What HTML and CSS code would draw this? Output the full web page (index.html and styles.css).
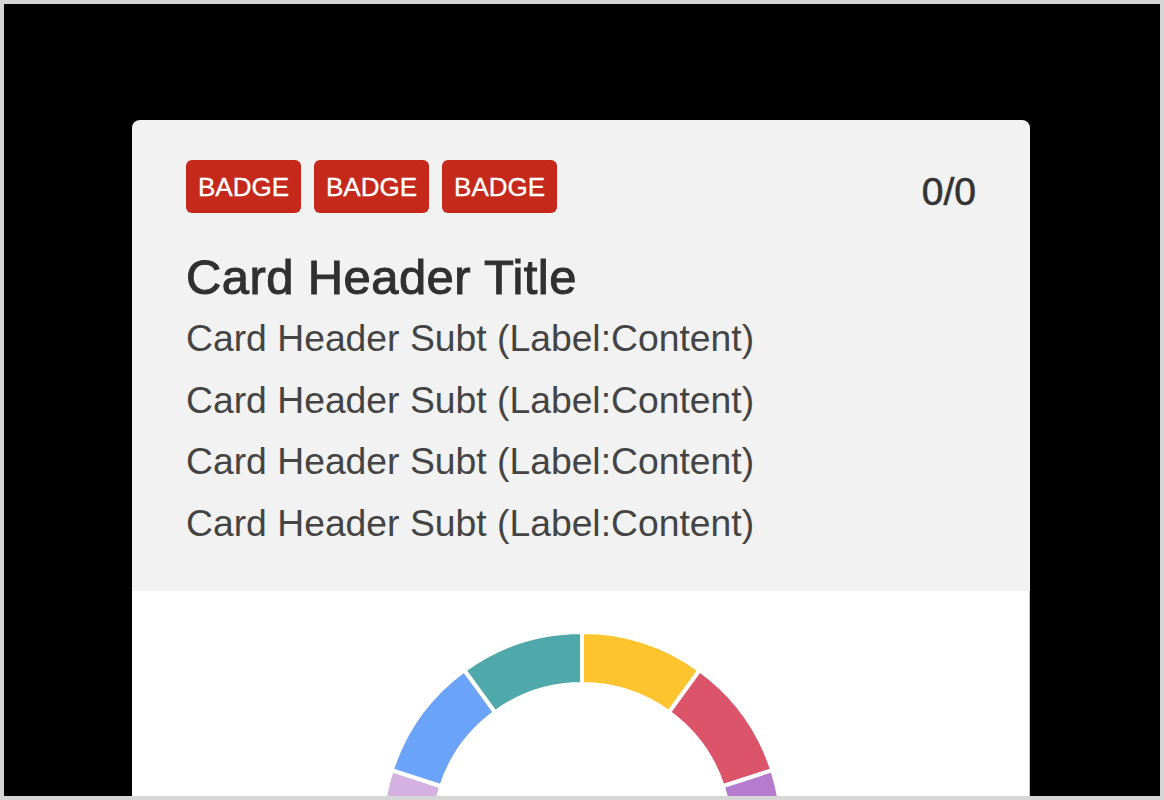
FILE: index.html
```html
<!DOCTYPE html>
<html lang="en">
<head>
<meta charset="utf-8">
<title>Card</title>
<link rel="stylesheet" href="styles.css">
</head>
<body>
<div class="frame">
  <div class="card">
    <div class="card-header">
      <div class="top-row">
        <div class="badges">
          <span class="badge">BADGE</span>
          <span class="badge">BADGE</span>
          <span class="badge">BADGE</span>
        </div>
        <div class="counter">0/0</div>
      </div>
      <h1 class="title">Card Header Title</h1>
      <p class="subtitle">Card Header Subt (Label:Content)</p>
      <p class="subtitle">Card Header Subt (Label:Content)</p>
      <p class="subtitle">Card Header Subt (Label:Content)</p>
      <p class="subtitle">Card Header Subt (Label:Content)</p>
    </div>
    <div class="card-body">
      <svg class="donut" width="400" height="400" viewBox="0 0 400 400">
        <g stroke="#ffffff" stroke-width="4" stroke-linejoin="miter">
          <path fill="#ffc42e" d="M200 0A200 200 0 0 1 317.56 38.2L286.99 80.27A148 148 0 0 0 200 52Z"/>
          <path fill="#dc546a" d="M317.56 38.2A200 200 0 0 1 390.22 138.2L340.76 154.27A148 148 0 0 0 286.99 80.27Z"/>
          <path fill="#b57bcf" d="M390.22 138.2A200 200 0 0 1 390.22 261.8L340.76 245.73A148 148 0 0 0 340.76 154.27Z"/>
          <path fill="#f2905a" d="M390.22 261.8A200 200 0 0 1 317.56 361.8L286.99 319.73A148 148 0 0 0 340.76 245.73Z"/>
          <path fill="#7ccf8c" d="M317.56 361.8A200 200 0 0 1 200 400L200 348A148 148 0 0 0 286.99 319.73Z"/>
          <path fill="#9e9e9e" d="M200 400A200 200 0 0 1 82.44 361.8L113.01 319.73A148 148 0 0 0 200 348Z"/>
          <path fill="#f7a8c4" d="M82.44 361.8A200 200 0 0 1 9.78 261.8L59.24 245.73A148 148 0 0 0 113.01 319.73Z"/>
          <path fill="#d4b1e1" d="M9.78 261.8A200 200 0 0 1 9.78 138.2L59.24 154.27A148 148 0 0 0 59.24 245.73Z"/>
          <path fill="#6ba3f8" d="M9.78 138.2A200 200 0 0 1 82.44 38.2L113.01 80.27A148 148 0 0 0 59.24 154.27Z"/>
          <path fill="#4fa8aa" d="M82.44 38.2A200 200 0 0 1 200 0L200 52A148 148 0 0 0 113.01 80.27Z"/>
        </g>
      </svg>
    </div>
  </div>
</div>
</body>
</html>
```

FILE: styles.css
```css
html, body {
  margin: 0;
  padding: 0;
  height: 800px;
  overflow: hidden;
}

body {
  font-family: "Liberation Sans", Arial, Helvetica, sans-serif;
  background: #d6d6d6;
}

.frame {
  box-sizing: border-box;
  height: 800px;
  border: 4px solid #d6d6d6;
  background: #000000;
  padding: 116px 130px 0 128px;
  overflow: hidden;
}

.card {
  border-radius: 8px 8px 0 0;
  overflow: hidden;
  height: 720px;
  display: flex;
  flex-direction: column;
}

.card-header {
  flex: none;
  background: #f2f2f2;
  height: 471px;
  box-sizing: border-box;
  padding: 40px 54px 0 54px;
}

.top-row {
  display: flex;
  justify-content: space-between;
  align-items: flex-start;
}

.badges {
  display: flex;
  gap: 13px;
}

.badge {
  display: flex;
  align-items: center;
  height: 53px;
  padding: 1px 12px 0 12px;
  box-sizing: border-box;
  background: #c5291c;
  color: #ffffff;
  font-size: 26px;
  -webkit-text-stroke: 0.3px #ffffff;
  border-radius: 6px;
}

.counter {
  font-size: 39px;
  line-height: 38px;
  margin-top: 13px;
  color: #333333;
  -webkit-text-stroke: 0.6px #333333;
}

.title {
  margin: 37px 0 0 0;
  font-size: 49px;
  line-height: 54px;
  font-weight: 400;
  letter-spacing: 0.4px;
  color: #303030;
  -webkit-text-stroke: 1px #303030;
}

.subtitle {
  margin: 0;
  font-size: 37.3px;
  line-height: 61.5px;
  color: #444444;
}

.title + .subtitle {
  margin-top: 4px;
}

.card-body {
  flex: 1;
  background: #ffffff;
  border-right: 1px solid #c4c4c4;
  display: flex;
  justify-content: center;
  align-items: flex-start;
  padding: 41px 0 0 3px;
}

.donut {
  display: block;
  flex: none;
}
```
